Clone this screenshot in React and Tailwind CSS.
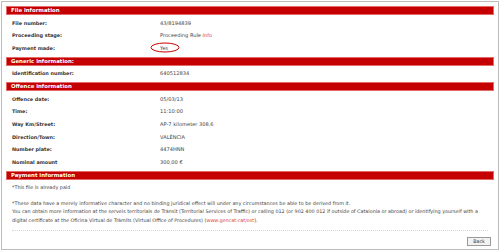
export default function App() {
  const font = { fontFamily: '"DejaVu Sans", Verdana, sans-serif' };
  const Bar = ({ children }) => (
    <div className="h-[9px] bg-[#c40000] border border-[#e46a6a] flex items-center pl-[4px] text-white font-bold text-[5.4px] leading-none">
      {children}
    </div>
  );
  const Row = ({ label, children, h = "h-[12.5px]" }) => (
    <div className={`${h} flex items-center pl-[6px]`}>
      <div className="w-[148px] font-bold text-[#333] text-[4.9px] leading-none">{label}</div>
      <div className="text-[#444] text-[5.1px] leading-none relative">{children}</div>
    </div>
  );
  return (
    <div className="w-[500px] h-[251px] bg-white pt-[1px] pl-[1px]" style={font}>
      <div className="w-[498px] h-[249px] border border-[#bcbcbc] px-[4px] pt-[4px] flex flex-col">
        <Bar>File information</Bar>
        <div className="pt-[2px] mb-[2.5px]">
          <Row label="File number:">43/8194839</Row>
          <Row label="Proceeding stage:">
            Proceeding Rule <span className="text-[#e03a3a]">Info</span>
          </Row>
          <Row label="Payment made:">
            <span className="relative">
              Yes
              <svg className="absolute left-[-10px] top-[-3px]" width="30" height="11" viewBox="0 0 30 11">
                <ellipse cx="15" cy="5.5" rx="14" ry="4.5" fill="none" stroke="#c40000" strokeWidth="1" />
              </svg>
            </span>
          </Row>
        </div>
        <Bar>Generic information:</Bar>
        <div className="pt-[1px] mb-[2.5px]">
          <Row label="Identification number:">640512834</Row>
        </div>
        <Bar>Offence information</Bar>
        <div className="pt-[2px] mb-[2.5px]">
          <Row label="Offence date:" h="h-[12.6px]">05/03/13</Row>
          <Row label="Time:" h="h-[12.6px]">11:10:00</Row>
          <Row label="Way Km/Street:" h="h-[12.6px]">AP-7 kilometer 308.6</Row>
          <Row label="Direction/Town:" h="h-[12.6px]">VALÈNCIA</Row>
          <Row label="Number plate:" h="h-[12.6px]">4474HNN</Row>
          <Row label="Nominal amount" h="h-[12.6px]">300,00 €</Row>
        </div>
        <Bar>Payment information</Bar>
        <div className="pl-[6px] text-[#444] text-[4.85px] leading-[8.6px]">
          <div className="pt-[3px]">*This file is already paid</div>
          <div className="pt-[7px]">
            <div className="whitespace-nowrap">*These data have a merely informative character and no binding juridical effect will under any circumstances be able to be derived from it.</div>
            <div className="whitespace-nowrap">You can obtain more information at the serveis territorials de Trànsit (Territorial Services of Traffic) or calling 012 (or 902 400 012 if outside of Catalonia or abroad) or identifying yourself with a</div>
            <div className="whitespace-nowrap">digital certificate at the Oficina Virtual de Tràmits (Virtual Office of Procedures) (<span className="text-[#e03a3a]">www.gencat.cat/ost</span>).</div>
          </div>
        </div>
        <div className="mt-[6px] mx-[6px] border-t border-dotted border-[#d8d8d8]"></div>
        <div className="flex justify-end pr-[3px] pt-[6px]">
          <div className="w-[24px] h-[9px] border border-[#9a9a9a] bg-[#f2f2f2] flex items-center justify-center text-[4.8px] text-[#333] leading-none">
            Back
          </div>
        </div>
      </div>
    </div>
  );
}
